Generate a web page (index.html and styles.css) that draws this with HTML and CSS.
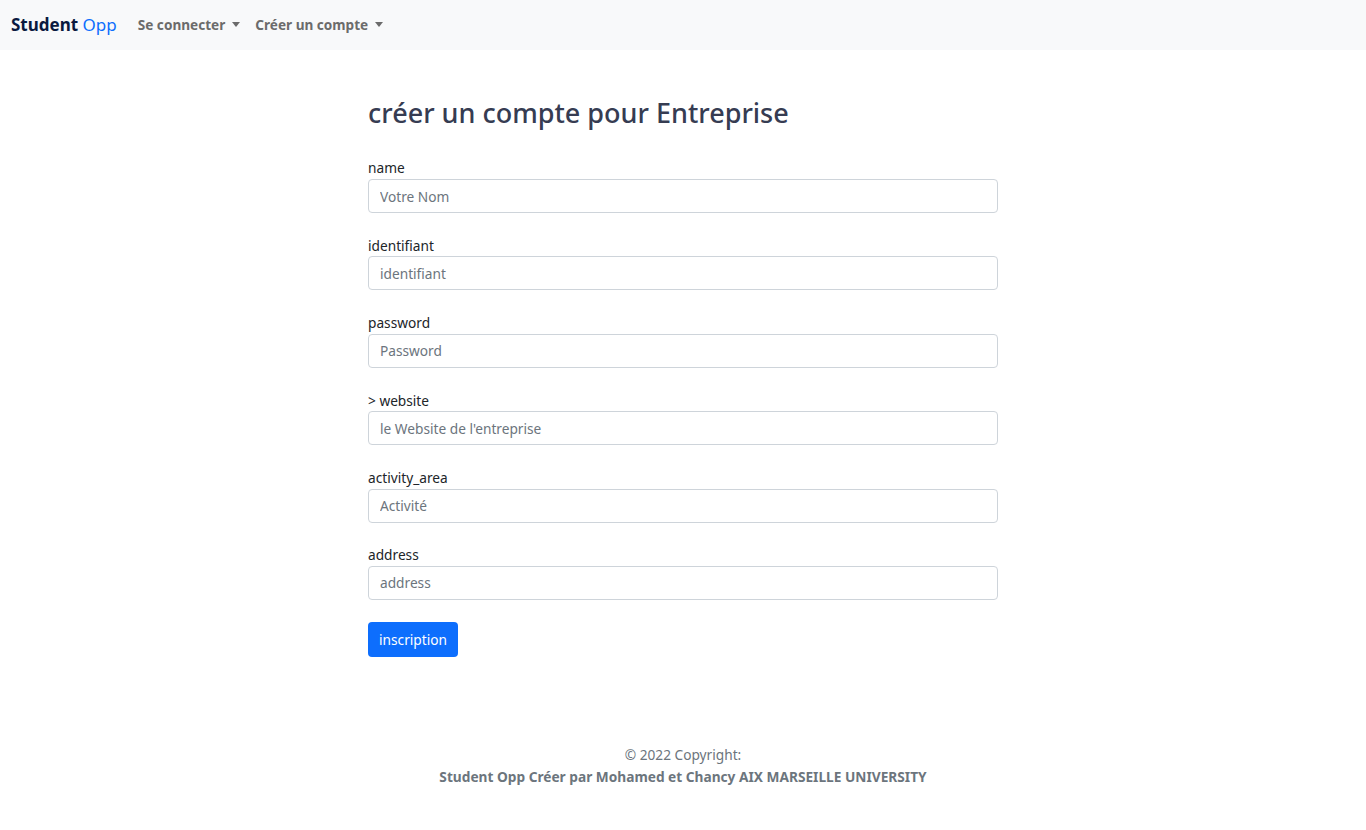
FILE: index.html
```html
<!DOCTYPE html>
<html lang="fr">
<head>
<meta charset="utf-8">
<title>Student Opp</title>
<link rel="stylesheet" href="styles.css">
</head>
<body>
<nav class="navbar">
  <a class="brand" href="#"><b>Student</b> <span class="brand-opp">Opp</span></a>
  <ul class="nav">
    <li class="nav-item"><a href="#">Se connecter</a><span class="caret"></span></li>
    <li class="nav-item"><a href="#">Créer un compte</a><span class="caret"></span></li>
  </ul>
</nav>
<main class="main">
  <h2 class="title">créer un compte pour Entreprise</h2>
  <form class="form">
    <div class="field"><label>name</label><input type="text" placeholder="Votre Nom"></div>
    <div class="field"><label>identifiant</label><input type="text" placeholder="identifiant"></div>
    <div class="field"><label>password</label><input type="password" placeholder="Password"></div>
    <div class="field"><label>&gt; website</label><input type="text" placeholder="le Website de l'entreprise"></div>
    <div class="field"><label>activity_area</label><input type="text" placeholder="Activité"></div>
    <div class="field"><label>address</label><input type="text" placeholder="address"></div>
    <button type="button" class="btn">inscription</button>
  </form>
</main>
<footer class="footer">
  <div>© 2022 Copyright:</div>
  <div class="footer-bold">Student Opp Créer par Mohamed et Chancy AIX MARSEILLE UNIVERSITY</div>
</footer>
</body>
</html>
```
FILE: styles.css
```css
* { box-sizing: border-box; }
html, body { margin: 0; padding: 0; }
body {
  font-family: "Noto Sans", "Open Sans", sans-serif;
  font-size: 13.7px;
  line-height: 1.5;
  color: #212529;
  background: #fff;
}
a { text-decoration: none; }
.navbar {
  height: 50px;
  background: #f8f9fa;
  display: flex;
  align-items: center;
  padding: 0 11px;
}
.brand {
  font-size: 17px;
  color: #0b1f4d;
  margin-right: 21px;
}
.brand b { font-weight: 700; color: #0a1a3f; }
.brand-opp { color: #0d6efd; font-weight: 400; }
.nav { list-style: none; margin: 0; padding: 0; display: flex; gap: 15px; }
.nav-item { display: flex; align-items: center; }
.nav-item a { color: #6b6b6b; font-weight: 700; font-size: 13.6px; }
.caret {
  display: inline-block;
  margin-left: 7px;
  width: 0; height: 0;
  border-left: 4px solid transparent;
  border-right: 4px solid transparent;
  border-top: 5px solid #6b6b6b;
}
.main {
  width: 630px;
  margin: 0 auto;
  padding-top: 47px;
}
.title {
  margin: 0 0 28px;
  font-size: 27px;
  font-weight: 500;
  line-height: 32.4px;
  color: #363c52;
}
.form { display: flex; flex-direction: column; }
.field { display: flex; flex-direction: column; margin-bottom: 21.8px; }
.field label { font-size: 13.7px; line-height: 21.6px; margin-bottom: 0; color: #212529; }
.field input {
  height: 34px;
  border: 1px solid #ced4da;
  border-radius: 4px;
  padding: 0 11px;
  font-family: inherit;
  font-size: 13.7px;
  color: #212529;
  background: #fff;
}
.field input::placeholder { color: #6c757d; }
.btn {
  align-self: flex-start;
  margin-top: 0;
  height: 35px;
  width: 90px;
  border: none;
  border-radius: 4px;
  background: #0d6efd;
  color: #fff;
  font-family: inherit;
  font-size: 13.7px;
  padding: 0;
}
.footer {
  margin-top: 87px;
  text-align: center;
  color: #6c757d;
  font-size: 13.7px;
  line-height: 22px;
}
.footer-bold { font-weight: 700; }
```
